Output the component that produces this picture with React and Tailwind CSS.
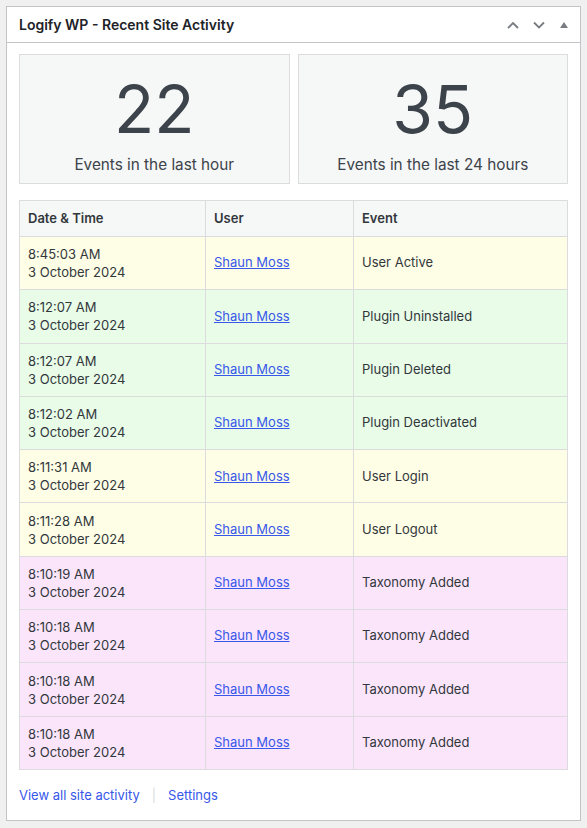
import React from "react";

const rows = [
  { time: "8:45:03 AM", event: "User Active", tone: "yellow" },
  { time: "8:12:07 AM", event: "Plugin Uninstalled", tone: "green" },
  { time: "8:12:07 AM", event: "Plugin Deleted", tone: "green" },
  { time: "8:12:02 AM", event: "Plugin Deactivated", tone: "green" },
  { time: "8:11:31 AM", event: "User Login", tone: "yellow" },
  { time: "8:11:28 AM", event: "User Logout", tone: "yellow" },
  { time: "8:10:19 AM", event: "Taxonomy Added", tone: "pink" },
  { time: "8:10:18 AM", event: "Taxonomy Added", tone: "pink" },
  { time: "8:10:18 AM", event: "Taxonomy Added", tone: "pink" },
  { time: "8:10:18 AM", event: "Taxonomy Added", tone: "pink" },
];

const toneBg = {
  yellow: "bg-[#fefee6]",
  green: "bg-[#e8fce8]",
  pink: "bg-[#fbe5fb]",
};

function StatBox({ value, label }) {
  return (
    <div className="flex-1 h-[130px] bg-[#f6f7f7] border border-[#dcdcde] flex flex-col items-center">
      <div className="text-[66px] leading-none mt-[21px] text-[#3c434a]">{value}</div>
      <div className="text-[15.3px] mt-[12px] text-[#3c434a]">{label}</div>
    </div>
  );
}

export default function App() {
  return (
    <div
      className="min-h-[828px] bg-[#f0f0f1] pt-[6px] px-[6px] pb-[8px]"
      style={{ fontFamily: "Inter, 'Liberation Sans', sans-serif" }}
    >
      <div className="bg-white border border-[#c3c4c7] w-[575px]">
        {/* Header */}
        <div className="h-[36px] border-b border-[#c3c4c7] flex items-center pl-[12px] pr-[10px]">
          <h2 className="text-[14px] font-semibold text-[#1d2327] flex-1">
            Logify WP - Recent Site Activity
          </h2>
          <div className="flex items-center gap-[12px] text-[#787c82]">
            <svg width="14" height="14" viewBox="0 0 14 14" fill="none" stroke="currentColor" strokeWidth="1.8">
              <path d="M2 10 L7 5 L12 10" />
            </svg>
            <svg width="14" height="14" viewBox="0 0 14 14" fill="none" stroke="currentColor" strokeWidth="1.8">
              <path d="M2 4.5 L7 9.5 L12 4.5" />
            </svg>
            <svg width="12" height="12" viewBox="0 0 12 12" fill="currentColor">
              <path d="M6 3 L10 9 L2 9 Z" />
            </svg>
          </div>
        </div>

        <div className="px-[12px] pt-[11px] pb-[15px]">
          {/* Stats */}
          <div className="flex gap-[8px]">
            <StatBox value="22" label="Events in the last hour" />
            <StatBox value="35" label="Events in the last 24 hours" />
          </div>

          {/* Table */}
          <table className="mt-[16px] w-[548px] border-collapse border border-[#dcdcde] text-[13px] text-[#32373c] table-fixed">
            <colgroup>
              <col className="w-[186px]" />
              <col className="w-[148px]" />
              <col className="w-[214px]" />
            </colgroup>
            <thead>
              <tr className="h-[36px] bg-[#f6f7f7]">
                <th className="text-left font-semibold px-[8px] border border-[#dcdcde]">Date &amp; Time</th>
                <th className="text-left font-semibold px-[8px] border border-[#dcdcde]">User</th>
                <th className="text-left font-semibold px-[8px] border border-[#dcdcde]">Event</th>
              </tr>
            </thead>
            <tbody>
              {rows.map((r, i) => (
                <tr key={i} className={`h-[53.3px] ${toneBg[r.tone]}`}>
                  <td className="px-[8px] border border-[#dcdcde] leading-[18px]">
                    {r.time}
                    <br />3 October 2024
                  </td>
                  <td className="px-[8px] border border-[#dcdcde]">
                    <a href="#" className="text-[#3858e9] underline">
                      Shaun Moss
                    </a>
                  </td>
                  <td className="px-[8px] border border-[#dcdcde]">{r.event}</td>
                </tr>
              ))}
            </tbody>
          </table>

          {/* Footer links */}
          <div className="mt-[16px] flex items-center text-[13px]">
            <a href="#" className="text-[#3858e9]">View all site activity</a>
            <span className="mx-[12px] text-[#dcdcde]">|</span>
            <a href="#" className="text-[#3858e9]">Settings</a>
          </div>
        </div>
      </div>
    </div>
  );
}
